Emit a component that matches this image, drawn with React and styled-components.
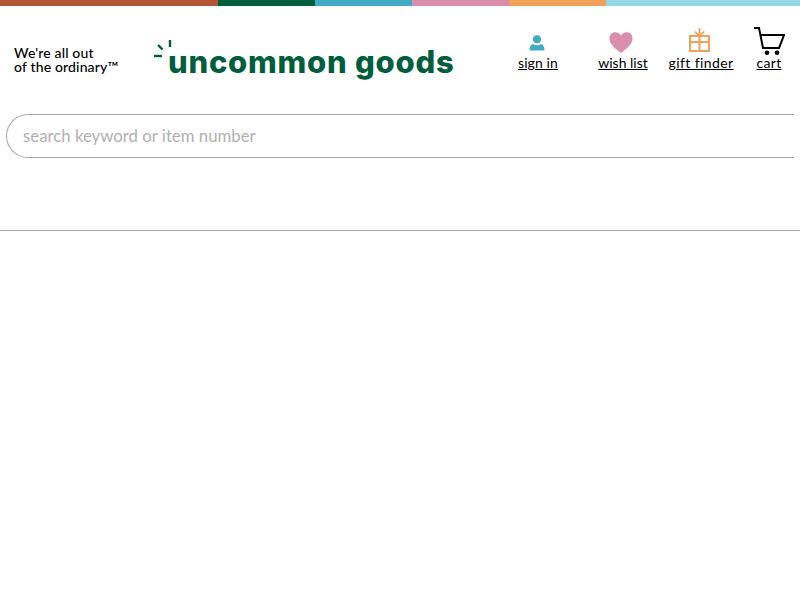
import React from "react";
import styled, { createGlobalStyle } from "styled-components";

const GlobalStyle = createGlobalStyle`
  html, body {
    margin: 0;
    padding: 0;
    background: #fff;
    font-family: "Lato", "Liberation Sans", sans-serif;
    font-variant-ligatures: none;
  }
`;

const Stripes = styled.div`
  display: flex;
  height: 6px;
`;

const Stripe = styled.div`
  width: ${(props) => props.$w}px;
  background: ${(props) => props.$color};
`;

const Header = styled.header`
  display: flex;
  height: 108px;
`;

const Tagline = styled.div`
  width: 140px;
  padding: 40px 0 0 14px;
  font-size: 14px;
  line-height: 14px;
  font-weight: 500;
  letter-spacing: 0.15px;
  color: #000;
  white-space: nowrap;
`;

const Logo = styled.a`
  display: flex;
  align-items: flex-start;
  width: 352px;
  padding-top: 34px;
  text-decoration: none;
`;

const LogoMark = styled.svg`
  width: 20px;
  height: 24px;
  flex: none;
`;

const LogoText = styled.span`
  margin-left: -6px;
  font-family: "Inter", sans-serif;
  font-size: 31px;
  line-height: 43px;
  font-weight: 800;
  letter-spacing: 0.75px;
  color: #005e3d;
  white-space: nowrap;
`;

const Nav = styled.nav`
  display: flex;
  align-items: flex-start;
  padding-top: 20px;
`;

const NavItem = styled.a`
  display: flex;
  flex-direction: column;
  align-items: center;
  width: ${(props) => props.$w}px;
  margin-left: ${(props) => props.$ml}px;
  color: #000;
  text-decoration: underline;
  font-size: 14px;
  line-height: 16px;
  letter-spacing: ${(props) => props.$ls || 0}px;
  white-space: nowrap;
`;

const IconSlot = styled.div`
  display: flex;
  align-items: flex-end;
  justify-content: center;
  height: 29px;
`;

const NavIcon = styled.svg`
  display: block;
  margin: 0 ${(props) => props.$mr || 0}px ${(props) => props.$mb || 0}px
    ${(props) => props.$ml || 0}px;
`;

const SearchRow = styled.div`
  padding: 0 6px;
`;

const SearchBox = styled.input`
  display: block;
  box-sizing: border-box;
  width: 100%;
  height: 44px;
  padding: 0 0 2px 16px;
  border: 1px solid #a8a8a8;
  border-right: 0;
  border-radius: 22px 0 0 22px;
  outline: none;
  font-family: "Lato", sans-serif;
  font-size: 16.8px;
  color: #333;

  &::placeholder {
    color: #b0b0b0;
    opacity: 1;
  }
`;

const Rule = styled.hr`
  margin: 72px 0 0;
  border: 0;
  border-top: 1px solid #a8a8a8;
`;

const stripes = [
  [218, "#b15534"],
  [97, "#005e3d"],
  [97, "#3fabc4"],
  [97, "#d98fab"],
  [97, "#f0a25a"],
  [194, "#94d5e6"],
];

export default function App() {
  return (
    <>
      <GlobalStyle />
      <Stripes>
        {stripes.map(([w, color]) => (
          <Stripe key={color} $w={w} $color={color} />
        ))}
      </Stripes>
      <Header>
        <Tagline>
          We're all out
          <br />
          of the ordinary™
        </Tagline>
        <Logo href="#">
          <LogoMark viewBox="0 0 20 24">
            <g stroke="#005e3d" strokeWidth="2.4" fill="none">
              <path d="M16 0v7" />
              <path d="M4 5l4.500 4.500" />
              <path d="M0 16h8" />
            </g>
          </LogoMark>
          <LogoText>uncommon goods</LogoText>
        </Logo>
        <Nav>
          <NavItem href="#" $w={50} $ml={7} $ls={0.1}>
            <IconSlot>
              <NavIcon width="16" height="16" viewBox="0 0 16 16" $mb={4} $mr={2}>
                <circle cx="8" cy="4.200" r="4" fill="#3fabc4" />
                <path d="M0.500 15.500c0-3.600 1-6 3.600-6.600 1.200 1 2.600 1.400 3.900 1.400s2.700-.4 3.900-1.400c2.600.6 3.600 3 3.600 6.600z" fill="#3fabc4" />
              </NavIcon>
            </IconSlot>
            sign in
          </NavItem>
          <NavItem href="#" $w={60} $ml={30}>
            <IconSlot>
              <NavIcon width="24" height="21" viewBox="0 0 24 21" $mb={2} $mr={4}>
                <path d="M12 21C7 17 1 13 .5 7 .2 3 3 .3 6.300.3 8.800.3 10.900 1.600 12 3.600 13.100 1.600 15.200.3 17.700.3 21 .3 23.800 3 23.500 7 23 13 17 17 12 21z" fill="#d98fab" />
              </NavIcon>
            </IconSlot>
            wish list
          </NavItem>
          <NavItem href="#" $w={66} $ml={15} $ls={0.4}>
            <IconSlot>
              <NavIcon width="21" height="24" viewBox="0 0 20 24" preserveAspectRatio="none" $mb={3} $mr={4}>
                <g stroke="#f0a25a" strokeWidth="2" fill="none">
                  <rect x="1" y="8" width="18" height="15" />
                  <path d="M1 14h18M10 8v15" />
                </g>
                <path d="M10 8V0M10 8L5.500 3.500M10 8l4.500-4.500" stroke="#f0a25a" strokeWidth="1.700" fill="none" />
              </NavIcon>
            </IconSlot>
            gift finder
          </NavItem>
          <NavItem href="#" $w={36} $ml={17} $ls={0.3}>
            <IconSlot>
              <NavIcon width="31" height="28" viewBox="0 0 31 28">
                <path d="M0 1h5l4 20h16l5-13H7" stroke="#000" strokeWidth="2" fill="none" />
                <circle cx="13" cy="25.700" r="2.300" fill="#000" />
                <circle cx="23" cy="25.700" r="2.300" fill="#000" />
              </NavIcon>
            </IconSlot>
            cart
          </NavItem>
        </Nav>
      </Header>
      <SearchRow>
        <SearchBox placeholder="search keyword or item number" />
      </SearchRow>
      <Rule />
    </>
  );
}
